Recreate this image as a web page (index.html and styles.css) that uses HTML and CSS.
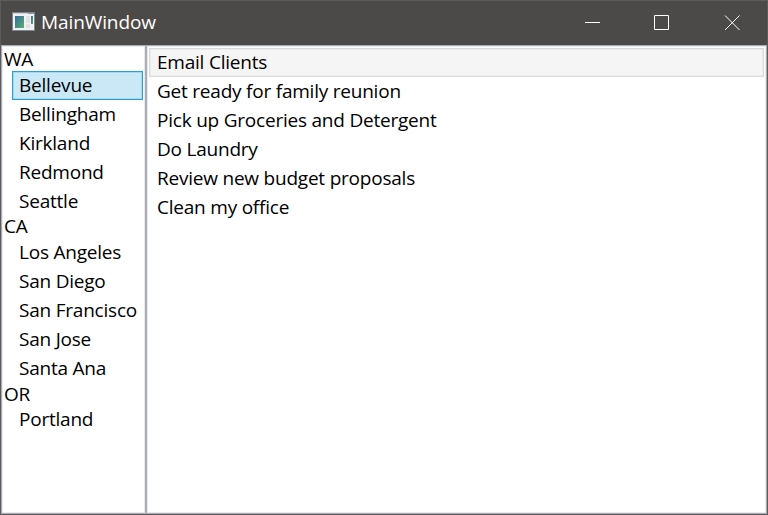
FILE: index.html
```html
<!DOCTYPE html>
<html lang="en">
<head>
<meta charset="utf-8">
<title>MainWindow</title>
<link rel="stylesheet" href="styles.css">
</head>
<body>
<div class="window">
  <header class="titlebar">
    <svg class="app-icon" width="23" height="19" viewBox="0 0 23 19">
      <defs><linearGradient id="pane" x1="0" y1="0" x2="1" y2="1"><stop offset="0" stop-color="#3568a4"/><stop offset="1" stop-color="#58b06c"/></linearGradient></defs>
      <rect width="23" height="19" fill="#7d8791"/>
      <rect x="1" y="1" width="21" height="17" fill="#f2f2f2"/>
      <rect x="1" y="1" width="15" height="1" fill="#cfd4d8"/>
      <rect x="16" y="1" width="6" height="1" fill="#8d979f"/>
      <rect x="3" y="4" width="9" height="12" fill="url(#pane)"/>
      <rect x="14" y="4" width="4" height="7" fill="#e2e2e2"/>
      <rect x="14" y="12" width="4" height="4" fill="#e2e2e2"/>
      <rect x="19" y="4" width="2" height="8" fill="url(#pane)"/>
    </svg>
    <h1 class="title">MainWindow</h1>
    <div class="controls">
      <svg width="70" height="44" viewBox="0 0 70 44"><path d="M22 21.500h15" /></svg>
      <svg width="70" height="44" viewBox="0 0 70 44"><path d="M21.500 14.500h14v14h-14z" /></svg>
      <svg width="64" height="44" viewBox="0 0 64 44"><path d="M22 14.500l14.500 14.500M36.500 14.500l-14.500 14.500" /></svg>
    </div>
  </header>
  <main class="content">
    <nav class="cities">
      <h2 class="group">WA</h2>
      <ul class="list">
        <li class="item selected">Bellevue</li>
        <li class="item">Bellingham</li>
        <li class="item">Kirkland</li>
        <li class="item">Redmond</li>
        <li class="item">Seattle</li>
      </ul>
      <h2 class="group">CA</h2>
      <ul class="list">
        <li class="item">Los Angeles</li>
        <li class="item">San Diego</li>
        <li class="item">San Francisco</li>
        <li class="item">San Jose</li>
        <li class="item">Santa Ana</li>
      </ul>
      <h2 class="group last">OR</h2>
      <ul class="list">
        <li class="item">Portland</li>
      </ul>
    </nav>
    <ul class="tasks">
      <li class="item inactive">Email Clients</li>
      <li class="item">Get ready for family reunion</li>
      <li class="item">Pick up Groceries and Detergent</li>
      <li class="item">Do Laundry</li>
      <li class="item">Review new budget proposals</li>
      <li class="item">Clean my office</li>
    </ul>
  </main>
</div>
</body>
</html>
```
FILE: styles.css
```css
* { box-sizing: border-box; margin: 0; padding: 0; }
body { font: 19px/25px "Open Sans", "Noto Sans", sans-serif; letter-spacing: -0.22px; color: #000; }
ul { list-style: none; }
.window { width: 768px; height: 515px; display: flex; flex-direction: column; background: #fff; border: 1px solid #5b5b59; overflow: hidden; }
.titlebar { height: 44px; flex: none; display: flex; align-items: center; padding-left: 11px; background: #4c4a48; color: #fff; }
.app-icon { margin-bottom: 3px; }
.title { font-size: 19px; font-weight: 400; line-height: 25px; letter-spacing: -0.1px; margin: 0 0 2px 6px; }
.controls { margin-left: auto; display: flex; }
.controls svg { display: block; fill: none; stroke: #fff; }
.content { flex: 1; display: flex; }
.cities, .tasks { border: 1px solid #abadb3; box-shadow: inset 0 0 0 1px #e9eaf0; }
.cities { width: 145px; padding: 3px 2px 1px 1px; }
.tasks { flex: 1; padding: 2px; }
.tasks .item { padding-left: 7px; }
.group { font-size: 19px; font-weight: 400; height: 22px; line-height: 21px; padding-left: 1px; }
.last { line-height: 23px; }
.list { padding-left: 9px; }
.item { height: 29px; line-height: 27px; border: 1px solid transparent; padding: 0 6px; white-space: nowrap; }
.selected { background: #cbe8f6; border-color: #26a0da; box-shadow: inset 0 0 0 1px #a5d8f0; }
.inactive { background: #f5f5f5; border-color: #dadada; box-shadow: inset 0 0 0 1px #ececec; }
```
